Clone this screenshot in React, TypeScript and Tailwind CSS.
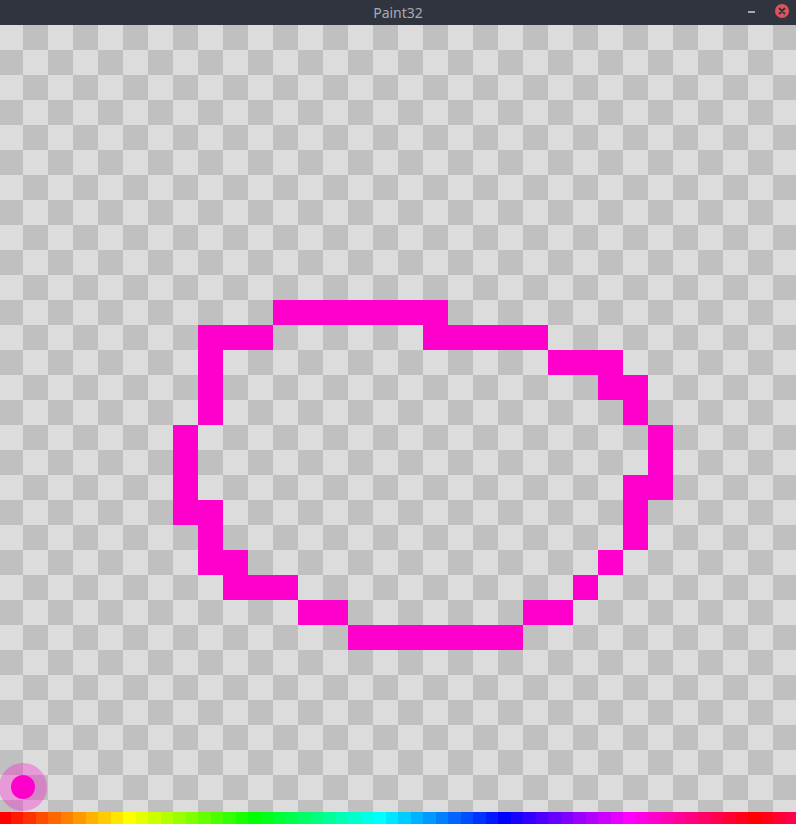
import { useMemo } from "react"

// filled cells of the 32x32 picture, by row -> columns
const PIXELS: Record<number, number[]> = {
  11: [11, 12, 13, 14, 15, 16, 17],
  12: [8, 9, 10, 17, 18, 19, 20, 21],
  13: [8, 22, 23, 24],
  14: [8, 24, 25],
  15: [8, 25],
  16: [7, 26],
  17: [7, 26],
  18: [7, 25, 26],
  19: [7, 8, 25],
  20: [8, 25],
  21: [8, 9, 24],
  22: [9, 10, 11, 23],
  23: [12, 13, 21, 22],
  24: [14, 15, 16, 17, 18, 19, 20],
}

const SIZE = 32

const hsl = (h: number) => `hsl(${h}, 100%, 50%)`

// 64 swatches, hue walks round the wheel and turns back at the end
const PALETTE = Array.from({ length: 64 }, (_, i) => (i <= 60 ? i * 6 : 360 - (i - 60) * 6))

const Cell = ({ filled, light }: { filled: boolean; light: boolean }) => {
  if (filled) return <div className="h-[25px] w-[25px] bg-[#ff00cc]" />
  return <div className={light ? "h-[25px] w-[25px] bg-[#dcdcdc]" : "h-[25px] w-[25px] bg-[#c0c0c0]"} />
}

const TitleBar = () => (
  <div className="relative flex h-[25px] w-full shrink-0 items-center justify-center bg-[#2f343f]">
    <span className="text-[14px] leading-none text-[#a6abb4] [font-family:'Noto_Sans',sans-serif]">Paint32</span>
    <div className="absolute right-[41px] top-[11px] h-[2px] w-[7px] bg-[#a4a9b2]" />
    <div className="absolute right-[7px] top-[4px] flex h-[14px] w-[14px] items-center justify-center rounded-full bg-[#e0535d]">
      <svg width="8" height="8" viewBox="0 0 8 8">
        <path d="M1.5 1.5 L6.5 6.5 M6.5 1.5 L1.5 6.5" stroke="#2f343f" strokeWidth="1.8" strokeLinecap="round" />
      </svg>
    </div>
  </div>
)

export default function App() {
  const rows = useMemo(
    () =>
      Array.from({ length: SIZE }, (_, r) =>
        Array.from({ length: SIZE }, (_, c) => ({
          filled: (PIXELS[r] || []).includes(c),
          light: (r + c) % 2 === 0,
        }))
      ),
    []
  )

  return (
    <div className="relative flex h-[824px] w-[796px] flex-col overflow-hidden bg-[#dcdcdc]">
      <TitleBar />
      <div className="relative flex-1 overflow-hidden">
        <div className="ml-[-2px] grid w-[800px] grid-cols-[repeat(32,25px)]">
          {rows.map((row, r) =>
            row.map((cell, c) => <Cell key={`${r}-${c}`} filled={cell.filled} light={cell.light} />)
          )}
        </div>

        {/* brush preview */}
        <div className="absolute left-[-1px] top-[738px] flex h-[48px] w-[48px] items-center justify-center rounded-full bg-[#ff00cc]/30">
          <div className="h-[24px] w-[24px] rounded-full bg-[#ff00cc]" />
        </div>

        {/* colour palette */}
        <div className="absolute bottom-0 left-[-2px] flex h-[12px] w-[800px]">
          {PALETTE.map((h, i) => (
            <div key={i} className="h-full flex-1" style={{ backgroundColor: hsl(h) }} />
          ))}
        </div>
      </div>
    </div>
  )
}
